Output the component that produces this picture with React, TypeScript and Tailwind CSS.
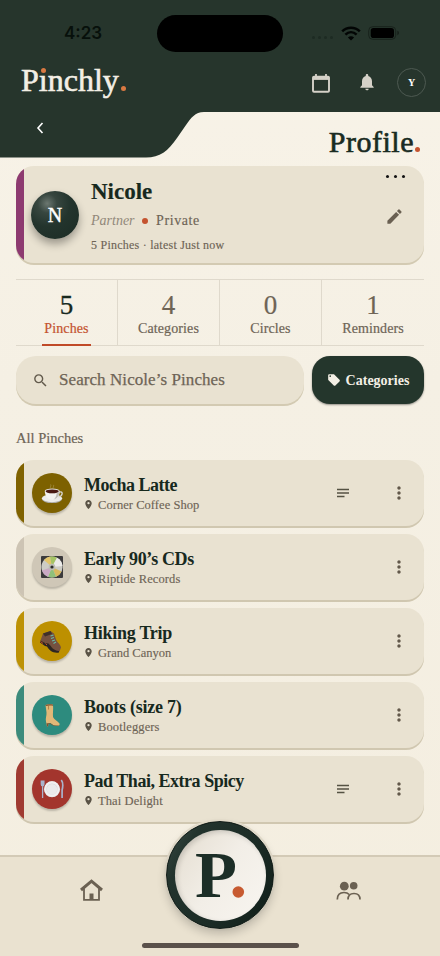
import type { ReactNode } from "react";
import { MdEdit, MdLocalOffer, MdMoreVert, MdNotifications, MdPlace, MdSearch } from "react-icons/md";

function CoffeeArt() {
  return (
    <svg viewBox="0 0 24 24" className="h-[23px] w-[23px]">
      <ellipse cx="11.5" cy="17.8" rx="10.5" ry="4.200" fill="#a9a8a2" />
      <ellipse cx="11.5" cy="17" rx="10.500" ry="4" fill="#ececea" />
      <path d="M19 10.500c4.500-1.500 4 4.500-1 5" fill="none" stroke="#d9d7d2" strokeWidth="1.400" />
      <path d="M4 9.500h15.500c0 5.500-3 9-7.700 9S4 15 4 9.500z" fill="#f4f3f0" />
      <path d="M13 18.400c4-1 6.500-4.500 6.500-8.900h-3c0 4-1 7.500-3.500 8.900z" fill="#c1beb9" />
      <ellipse cx="11.700" cy="9.500" rx="7.800" ry="2.700" fill="#e2dfda" />
      <ellipse cx="11.700" cy="9.700" rx="6.800" ry="2" fill="#4a1a14" />
      <path d="M10 6.500c-1-1.500 1-2 0-4M13 6.500c-1-1.500 1-2 0-3.500" fill="none" stroke="#cfc39a" strokeWidth=".6" opacity=".6" />
    </svg>
  );
}

function DiscArt() {
  return (
    <svg viewBox="0 0 24 24" className="h-6 w-6">
      <rect x="1" y="1" width="22" height="22" rx="1" fill="#3b3a3c" />
      <circle cx="12" cy="12" r="10.600" fill="#cdccc5" />
      <path d="M12 12L4 5A10.600 10.600 0 0 1 10 1.600z" fill="#e3c56b" />
      <path d="M12 12L10 1.600A10.600 10.600 0 0 1 17 2.700z" fill="#a5c465" />
      <path d="M12 12L17 2.700A10.600 10.600 0 0 1 22.600 11z" fill="#ecebe9" />
      <path d="M12 12L21.500 16.500A10.600 10.600 0 0 1 16 21.800z" fill="#d7b95f" />
      <path d="M12 12L16 21.800A10.600 10.600 0 0 1 8 21.800z" fill="#8fc07a" />
      <path d="M12 12L8 21.800A10.600 10.600 0 0 1 2 15.500z" fill="#c9a9c4" />
      <circle cx="12" cy="12" r="3.300" fill="#bdbdb4" />
      <circle cx="12" cy="12" r="1.600" fill="#2c2c2c" />
    </svg>
  );
}

function HikingBootArt() {
  return (
    <svg viewBox="0 0 24 24" className="mr-[2px] h-6 w-6">
      <path d="M4 4.500L11.500 2l3.500 2.500 2 6c1 3 4.500 4.500 5 8l-1.500 4c-3 .5-6-1-8-4.500L9 15l-3-.5-4.500-3z" fill="#75513f" />
      <path d="M4 4.500L11.500 2l1.500 3-7 2.500z" fill="#3f302a" />
      <path d="M1.500 11.500L6 14l3.500.5c3 3 4.500 7 10.500 7.500v1.500c-6 1-9.500-2-12-6L6 17l-5-3.500z" fill="#2c2523" />
      <path d="M1.500 12.500l2.500 2M6.500 14.500l1.500 1.500" stroke="#c84a2c" strokeWidth="1" />
      <path d="M11.500 7l3-1M12 9.500l3-1M13 12l3-1M14.500 14.500l2.500-1.500" stroke="#69b8a9" strokeWidth="1.100" />
    </svg>
  );
}

function TallBootArt() {
  return (
    <svg viewBox="0 0 24 24" className="h-6 w-6">
      <path d="M5.500 2c2.500-.8 5-.8 7.500-.3.500 4.300-.3 9 0 12.300 1 2.500 4.500 4 6.500 6.500.5 1.500-.5 2.500-2 2.500-3 0-5-1-7-3l-2 .2-.5 3.300H7l-1-5c-.8-3 .8-6 .5-9z" fill="#e2b878" />
      <path d="M5.500 2c2.500-.8 5-.8 7.500-.3v1c-2.500-.4-5-.4-7.200.3zM10.500 20.200c2 2 4.500 2.300 8.500 2-.5.800-6 1.300-8.800-1.500l-1.700.2-.5 2.600H7l-.5-3.300z" fill="#805230" />
      <path d="M8.500 3v3.500" stroke="#aa7840" strokeWidth=".8" fill="none" />
    </svg>
  );
}

function PlateArt() {
  return (
    <svg viewBox="0 0 24 24" className="h-6 w-6">
      <path d="M1.300 3.500v3.800c0 1 .5 1.600 1.300 1.600s1.300-.6 1.300-1.600V3.500M2.600 3.500V21" stroke="#a9b3cc" strokeWidth="1.300" fill="none" />
      <path d="M21.300 3c1.500 2 1.800 6 .8 10V21" stroke="#a9b3cc" strokeWidth="1.700" fill="none" />
      <circle cx="12" cy="12.300" r="8" fill="#dddddf" />
      <circle cx="12" cy="12" r="7.700" fill="#f1f0f1" />
      <circle cx="12" cy="12" r="5.600" fill="#d8d7d9" />
      <circle cx="12" cy="12.300" r="5.200" fill="#ebeaeb" />
    </svg>
  );
}

type Pinch = {
  title: string;
  place: string;
  bar: string;
  disc: string;
  art: ReactNode;
  tracking: string;
  placeTracking: string;
  notes?: boolean;
};

const pinches: Pinch[] = [
  { title: "Mocha Latte", place: "Corner Coffee Shop", bar: "bg-[#806200]", disc: "bg-[#7d6100]", art: <CoffeeArt />, tracking: "tracking-[-0.5px]", placeTracking: "tracking-[0.05px]", notes: true },
  { title: "Early 90’s CDs", place: "Riptide Records", bar: "bg-[#cdc4b4]", disc: "bg-[#cfc7b7]", art: <DiscArt />, tracking: "tracking-[-0.4px]", placeTracking: "tracking-[0.1px]" },
  { title: "Hiking Trip", place: "Grand Canyon", bar: "bg-[#bd9206]", disc: "bg-[#bd9000]", art: <HikingBootArt />, tracking: "tracking-[-0.25px]", placeTracking: "tracking-[0px]" },
  { title: "Boots (size 7)", place: "Bootleggers", bar: "bg-[#3c8b7c]", disc: "bg-[#2d8b7e]", art: <TallBootArt />, tracking: "tracking-[-0.25px]", placeTracking: "tracking-[0.1px]" },
  { title: "Pad Thai, Extra Spicy", place: "Thai Delight", bar: "bg-[#a03b32]", disc: "bg-[#a3352d]", art: <PlateArt />, tracking: "tracking-[-0.47px]", placeTracking: "tracking-[0.1px]", notes: true },
];

const stats = [
  { value: "5", label: "Pinches" },
  { value: "4", label: "Categories" },
  { value: "0", label: "Circles" },
  { value: "1", label: "Reminders" },
];

function StatusBar() {
  return (
    <div className="flex h-[66px] items-center">
      <span className="ml-[64px] w-[93px] font-['Inter',sans-serif] text-[17px] font-semibold leading-none text-[#07100b]">4:23</span>
      <div className="h-[37px] w-[126px] rounded-full bg-black" />
      <div className="ml-[29px] mt-[9px] flex gap-[3px]">
        <i className="h-[3px] w-[3px] rounded-full bg-[#1d2b23]" />
        <i className="h-[3px] w-[3px] rounded-full bg-[#1d2b23]" />
        <i className="h-[3px] w-[3px] rounded-full bg-[#1d2b23]" />
        <i className="h-[3px] w-[3px] rounded-full bg-[#1d2b23]" />
      </div>
      <svg width="20" height="15" viewBox="0 0 20 15" className="ml-[8px]" fill="none" stroke="#020504" strokeWidth="2.500">
        <path d="M1.200 5.300C6.200.4 13.800.4 18.800 5.300M4.400 8.700c3.300-3.200 7.900-3.200 11.200 0" />
        <path d="M10 14.500L6.900 11.400c1.700-1.600 4.500-1.600 6.200 0z" fill="#020504" stroke="none" />
      </svg>
      <svg width="32" height="14" viewBox="0 0 32 14" className="ml-[7px]">
        <rect x=".7" y=".7" width="27" height="12.600" rx="4" fill="none" stroke="#18221c" />
        <rect x="2.700" y="2" width="23.300" height="10" rx="2.800" fill="#000" />
        <path d="M29.500 4.800c1.600.6 1.600 3.800 0 4.400z" fill="#101813" />
      </svg>
    </div>
  );
}

function Header() {
  return (
    <header className="relative h-[166px] shrink-0">
      <svg className="absolute inset-0" width="440" height="158" viewBox="0 0 440 158">
        <path d="M0 0H440V112H204C195 112 191 118 186 125L177 138C168 151 160 157.500 146 157.500H0Z" fill="#26352c" />
      </svg>
      <div className="relative">
        <StatusBar />
        <div className="flex h-[34px] items-center pl-[21px] pr-[14px]">
          <div className="relative -mt-[7px] text-[32px] leading-[34px] text-[#f3efe5] [-webkit-text-stroke:0.6px]">
            Pınchly
            <i className="ml-[2px] inline-block h-[5px] w-[5px] rounded-full bg-[#d97942]" />
            <i className="absolute left-[20px] top-[5px] h-[5px] w-[5px] rounded-full bg-[#d97942]" />
          </div>
          <svg width="18" height="19" viewBox="0 0 18 19" className="ml-auto">
            <path d="M4 0v3M14 0v3" stroke="#d5d1c8" strokeWidth="1.800" />
            <rect x="1" y="2.600" width="16" height="15.200" rx="1" fill="none" stroke="#d5d1c8" strokeWidth="1.900" />
            <path d="M1 2.500h16v3.400H1z" fill="#d5d1c8" />
          </svg>
          <MdNotifications size={20} color="#d5d1c8" className="ml-[27px] -mt-[2px]" />
          <div className="ml-[20px] -mt-[2px] flex h-[29px] w-[29px] items-center justify-center rounded-full border border-[#4d5951] text-[10px] font-bold text-white">Y</div>
        </div>
        <div className="flex h-[66px] items-start">
          <svg width="8" height="12" viewBox="0 0 8 12" className="ml-[36px] mt-[22px]">
            <path d="M6.500 1L2 6l4.500 5" fill="none" stroke="#fff" strokeWidth="1.600" />
          </svg>
          <h1 className="ml-auto mr-[20px] mt-[24px] flex items-baseline text-[30px] leading-[36px] tracking-[0.5px] text-[#1a2b22] [-webkit-text-stroke:0.6px]">
            Profile<i className="ml-[1px] h-[5px] w-[5px] rounded-full bg-[#c4532f]" />
          </h1>
        </div>
      </div>
    </header>
  );
}

function ProfileCard() {
  return (
    <section className="mx-4 flex h-[97px] shrink-0 overflow-hidden rounded-[18px] bg-[#e9e2d1] shadow-[0_2px_0_#d3cab2]">
      <div className="w-2 bg-[#8d3a70]" />
      <div className="ml-[7px] mt-[25px] flex h-[48px] w-[48px] items-center justify-center rounded-full bg-[radial-gradient(circle_at_34%_26%,#6b7770_0%,#37463f_20%,#23342d_48%,#1b2b24_100%)] text-[20px] text-white shadow-[0_5px_8px_#00000055] [-webkit-text-stroke:0.4px]">
        N
      </div>
      <div className="ml-[12px] flex flex-col [-webkit-text-stroke:0.15px]">
        <h2 className="mt-[13px] text-[23px] font-bold leading-[26px] text-[#17291e]">Nicole</h2>
        <div className="mt-[7px] flex items-center text-[14px] leading-[18px] text-[#6e6456]">
          <em className="w-[44px] text-[14px] text-[#91887a] [-webkit-text-stroke:0px]">Partner</em>
          <i className="ml-[7px] mr-[8px] h-[6px] w-[6px] rounded-full bg-[#c4532f]" />
          <span className="tracking-[0.6px]">Private</span>
        </div>
        <p className="mt-[7px] text-[12px] leading-[16px] tracking-[0.24px] text-[#6e6456]">5 Pinches · latest Just now</p>
      </div>
      <div className="ml-auto mr-[19px] mt-[9px] flex flex-col items-center">
        <div className="flex gap-[5px]">
          <i className="h-[3px] w-[3px] rounded-full bg-[#111]" />
          <i className="h-[3px] w-[3px] rounded-full bg-[#111]" />
          <i className="h-[3px] w-[3px] rounded-full bg-[#111]" />
        </div>
        <MdEdit size={19} color="#6a6052" className="-ml-[3px] mt-[29px]" />
      </div>
    </section>
  );
}

function Stats() {
  return (
    <section className="mx-4 mt-[16px] grid h-[67px] shrink-0 grid-cols-4 divide-x divide-[#dfd9cc] border-y border-[#dfd9cc] [-webkit-text-stroke:0.2px]">
      {stats.map((s, i) => (
        <div key={s.label} className="flex flex-col items-center">
          <b className={`mt-[11px] text-[27px] font-normal leading-[28px] ${i === 0 ? "text-[#17291e] [-webkit-text-stroke:0.3px]" : "text-[#6e6456]"}`}>{s.value}</b>
          <span className={`mt-[1px] text-[14px] leading-[18px] tracking-[0.1px] ${i === 0 ? "text-[#c4532f]" : "text-[#6e6456]"}`}>{s.label}</span>
          {i === 0 && <i className="mt-[6px] h-[2px] w-[49px] shrink-0 bg-[#c04a28]" />}
        </div>
      ))}
    </section>
  );
}

function PinchRow({ pinch }: { pinch: Pinch }) {
  return (
    <li className="flex h-[66px] shrink-0 items-center overflow-hidden rounded-[18px] bg-[#e9e2d1] shadow-[0_2px_0_#d0c7b0]">
      <div className={`h-full w-2 ${pinch.bar}`} />
      <div className={`ml-2 flex h-10 w-10 items-center justify-center rounded-full shadow-[0_2px_2px_#00000033] ${pinch.disc}`}>{pinch.art}</div>
      <div className="ml-[12px] mt-[1px]">
        <h3 className={`text-[18px] font-bold leading-[22px] text-[#17291e] ${pinch.tracking}`}>{pinch.title}</h3>
        <p className={`flex items-center text-[12.5px] leading-[18px] text-[#6e6456] [-webkit-text-stroke:0.15px] ${pinch.placeTracking}`}>
          <MdPlace size={11} color="#5a5346" className="-ml-px mr-[4px]" />
          {pinch.place}
        </p>
      </div>
      <div className="ml-auto mr-[15px] flex items-center">
        {pinch.notes && (
          <svg width="12" height="10" viewBox="0 0 12 10" className="mr-[40px]">
            <path d="M0 1.500h12M0 5h12M0 8.500h7.500" stroke="#555243" strokeWidth="1.500" />
          </svg>
        )}
        <MdMoreVert size={20} color="#62584a" />
      </div>
    </li>
  );
}

function BottomNav() {
  return (
    <nav className="absolute bottom-0 left-0 h-[101px] w-full border-t-2 border-[#d3cab6] bg-[#eae2d0]">
      <div className="flex items-start justify-between pl-[80px] pr-[79px]">
        <svg width="23" height="22" viewBox="0 0 23 22" className="mt-[22px]" fill="none" stroke="#6b6152">
          <path d="M1 11L11.500 2.200 22 11" strokeWidth="3" />
          <path d="M4 9.500v11.400h15V9.500" strokeWidth="1.800" />
          <path d="M9.500 14.500h4v6h-4z" fill="#6b6152" stroke="none" />
        </svg>
        <svg width="25" height="20" viewBox="0 0 25 20" className="mt-[24px]" fill="none" stroke="#6b6152" strokeWidth="1.700">
          <circle cx="8.300" cy="5.200" r="4.400" fill="#6b6152" stroke="none" />
          <circle cx="17.700" cy="4.800" r="3.800" fill="#6b6152" stroke="none" />
          <path d="M1.300 18.500c0-4.800 2.800-7 6.700-7 2.200 0 4 .7 5.200 2" />
          <path d="M12 18.500c0-4 2.300-6 6-6s6 2 6 6" />
        </svg>
      </div>
      <div className="absolute left-1/2 top-[-36px] flex h-[108px] w-[108px] -translate-x-1/2 items-center justify-center rounded-full border border-[#101b17] bg-[linear-gradient(120deg,#3b4b46_0%,#22332d_22%,#1c2c26_60%,#0f1d18_100%)] shadow-[0_5px_10px_#00000030,0_0_0_2px_#e5decd]">
        <div className="relative h-[91px] w-[91px] rounded-full bg-[linear-gradient(125deg,#e4ddd0_0%,#f2eee7_50%,#f8f5f0_100%)] shadow-[inset_2px_2px_5px_#00000026]">
          <svg className="absolute inset-0" width="91" height="91" viewBox="0 0 91 91">
            <text x="20" y="66.500" fontSize="66" fontWeight="bold" textLength="42" lengthAdjust="spacingAndGlyphs" fill="#1c2e27">P</text>
            <circle cx="63.300" cy="62" r="5.800" fill="#c75a30" />
          </svg>
        </div>
      </div>
      <div className="absolute bottom-[8px] left-[142px] h-[5px] w-[157px] rounded-full bg-[#5b514b]" />
    </nav>
  );
}

export default function App() {
  return (
    <main className="relative flex h-[956px] w-[440px] flex-col overflow-hidden bg-[linear-gradient(#f8f3e8_0%,#f5f0e4_40%,#f4eee0_100%)] font-['Liberation_Serif',serif]">
      <Header />
      <ProfileCard />
      <Stats />
      <div className="mx-4 mt-[10px] flex h-[48px] shrink-0 gap-2">
        <div className="flex flex-1 items-center rounded-[20px] bg-[#e9e2d1] pl-[16px] text-[17px] tracking-[0.07px] text-[#6e6456] shadow-[0_2px_0_#d3cab2] [-webkit-text-stroke:0.25px]">
          <MdSearch size={17} color="#625a4c" className="mr-[10px]" />
          <span>Search Nicole’s Pinches</span>
        </div>
        <button className="flex w-[112px] items-center justify-center gap-[5px] rounded-[18px] bg-[#24362c] text-[14px] font-bold text-[#f3efe5] shadow-[0_1px_2px_#00000066]">
          <MdLocalOffer size={14} />
          Categories
        </button>
      </div>
      <h4 className="mx-4 mt-[24px] text-[14.5px] leading-[20px] text-[#6e6456] [-webkit-text-stroke:0.2px]">All Pinches</h4>
      <ul className="mx-4 mt-[12px] flex flex-col gap-2">
        {pinches.map((p) => (
          <PinchRow key={p.title} pinch={p} />
        ))}
      </ul>
      <BottomNav />
    </main>
  );
}
